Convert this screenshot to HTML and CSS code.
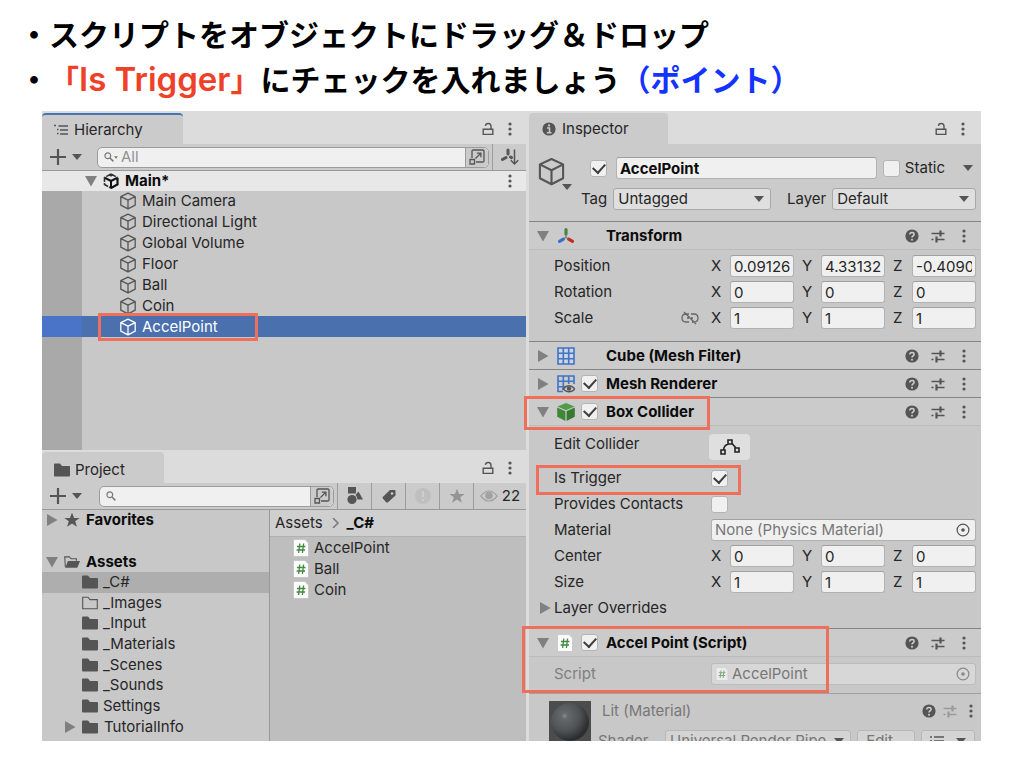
FILE: index.html
```html
<!DOCTYPE html>
<html lang="ja">
<head>
<meta charset="utf-8">
<title>Is Trigger</title>
<link rel="stylesheet" href="styles.css">
</head>
<body>
<svg class="sprite" aria-hidden="true">
  <symbol id="cube" viewBox="0 0 18 18"><path d="M9 1.2 16.2 4.6V13.2L9 16.9 1.8 13.2V4.6ZM1.8 4.6 9 8.2 16.2 4.6M9 8.2V16.9" fill="none" stroke="currentColor" stroke-width="1.3" stroke-linejoin="round"/></symbol>
  <symbol id="down" viewBox="0 0 12 12"><path d="M0 1H12L6 11.5Z" fill="currentColor"/></symbol>
  <symbol id="right" viewBox="0 0 12 12"><path d="M1 0V12L11.5 6Z" fill="currentColor"/></symbol>
  <symbol id="caret" viewBox="0 0 10 6"><path d="M0 0H10L5 6Z" fill="currentColor"/></symbol>
  <symbol id="dots" viewBox="0 0 4 14"><g fill="currentColor"><circle cx="2" cy="2" r="1.6"/><circle cx="2" cy="7" r="1.6"/><circle cx="2" cy="12" r="1.6"/></g></symbol>
  <symbol id="lock" viewBox="0 0 12 14"><path d="M1.2 7.2H10.8V12.4H1.2ZM9 7V4.2C9 .8 3.8.6 3.4 3.8" fill="none" stroke="currentColor" stroke-width="1.4"/></symbol>
  <symbol id="plus" viewBox="0 0 16 16"><path d="M8 0V16M0 8H16" stroke="currentColor" stroke-width="2.2"/></symbol>
  <symbol id="search" viewBox="0 0 10 10"><circle cx="3.8" cy="3.8" r="2.9" fill="none" stroke="currentColor" stroke-width="1.2"/><path d="M6 6 9.4 9.4" stroke="currentColor" stroke-width="1.5"/></symbol>
  <symbol id="popout" viewBox="0 0 16 16"><g fill="none" stroke="currentColor" stroke-width="1.3"><path d="M3 9V2.2Q3 1 4.2 1H13.8Q15 1 15 2.2V11.8Q15 13 13.800 13H7"/><path d="M1 10.500H5.500V15H1ZM6.500 9.500 11.600 4.400M7.800 4.200H11.900V8.300"/></g></symbol>
  <symbol id="folder" viewBox="0 0 16 14"><path d="M0 1.500Q0 .5 1 .5H6L8 3H15Q16 3 16 4V12.500Q16 13.500 15 13.500H1Q0 13.500 0 12.500Z" fill="currentColor"/></symbol>
  <symbol id="folder-line" viewBox="0 0 16 14"><path d="M.7 1.200H6L8 3.600H15.300V12.800H.7Z" fill="none" stroke="currentColor" stroke-width="1.100"/></symbol>
  <symbol id="folder-open" viewBox="0 0 18 14"><path d="M1.500 12.500.8 1.200H6L8 3.400H14V5.600" fill="none" stroke="currentColor" stroke-width="1.200"/><path d="M4.500 5.800H18L15 13.500H1.300Z" fill="currentColor"/></symbol>
  <symbol id="star" viewBox="0 0 16 16"><path d="M8 .8 10.100 6H15.600L11.200 9.300 12.900 14.800 8 11.500 3.100 14.800 4.800 9.300.4 6H5.900Z" fill="currentColor"/></symbol>
  <symbol id="help" viewBox="0 0 14 14"><circle cx="7" cy="7" r="6.600" fill="currentColor"/><path d="M4.800 5.500C4.900 2.600 9.300 2.800 9.100 5.400 9 6.800 7 6.900 7 8.500" fill="none" stroke="#d0d0d0" stroke-width="1.500"/><circle cx="7" cy="10.700" r="1" fill="#d0d0d0"/></symbol>
  <symbol id="sliders" viewBox="0 0 14 14"><g stroke="currentColor" fill="none"><path d="M.5 4.500H13.500M.5 10.500H2.500M5 10.500H13.500" stroke-width="1.300"/><path d="M9.500 1.500V7.500M5.500 7.500V13.500" stroke-width="2.200"/></g></symbol>
  <symbol id="script" viewBox="0 0 16 18"><path d="M1.500 .5H12L15.500 4V16.500Q15.500 17.500 14.500 17.500H1.500Q.5 17.500 .5 16.500V1.500Q.5 .5 1.500 .5Z" fill="#fbfbfb" stroke="#bbb" stroke-width=".6"/><path d="M6.800 4.500 5.600 14M10.600 4.500 9.400 14M4 7.500H12.400M3.600 11H12" stroke="#43893f" stroke-width="1.300" fill="none"/></symbol>
  <symbol id="axes" viewBox="0 0 18 18"><g stroke-width="3.200" fill="none"><path d="M9 2.500V7" stroke="#43893f" stroke-linecap="round"/><path d="M6.300 12.200 2.500 14.300" stroke="#2f6fd6" stroke-linecap="round"/><path d="M11.700 12.200 15.500 14.300" stroke="#c42a20" stroke-linecap="round"/><path d="M9 7V10.500L6 12M9 10.500 12 12" stroke="#666" stroke-width="1"/></g></symbol>
  <symbol id="grid" viewBox="0 0 18 18"><path d="M1.700 1.700H16.300V16.300H1.700Z" fill="#cfe0f8" opacity=".5"/><path d="M1 1H17V17H1ZM6.300 1V17M11.700 1V17M1 6.300H17M1 11.700H17" fill="none" stroke="#3f74c8" stroke-width="1.600"/></symbol>
  <symbol id="renderer" viewBox="0 0 18 18"><path d="M6 16.500H1V1H17V9M6.300 1V15M11.700 1V9M1 6.300H17M1 11.700H8" fill="none" stroke="#3f74c8" stroke-width="1.600"/><path d="M6 14Q12 7.500 18 14 12 19.500 6 14Z" fill="#cbcbcb" stroke="#555" stroke-width="1.400"/><circle cx="12" cy="13.600" r="2.200" fill="#555"/></symbol>
  <symbol id="collider" viewBox="0 0 18 18"><path d="M9 0 17.500 3.600 9 7.200.5 3.600Z" fill="#549a4a"/><path d="M.2 4.600 8.400 8.200V18L.2 13.800Z" fill="#418739"/><path d="M17.800 4.600 9.600 8.200V18L17.800 13.800Z" fill="#37792f"/></symbol>
  <symbol id="eye" viewBox="0 0 18 12"><path d="M.8 6Q9-4 17.200 6 9 16 .8 6Z" fill="none" stroke="currentColor" stroke-width="1.200"/><circle cx="9" cy="5.500" r="3.800" fill="currentColor"/></symbol>
  <symbol id="target" viewBox="0 0 14 14"><circle cx="7" cy="7" r="5.900" fill="none" stroke="currentColor" stroke-width="1.200"/><circle cx="7" cy="7" r="1.800" fill="currentColor"/></symbol>
</svg>

<main class="slide">
  <ul class="points">
    <li>・スクリプトをオブジェクトにドラッグ＆ドロップ</li>
    <li>・<span class="red">「<span class="latin">Is Trigger</span>」</span>にチェックを入れましょう<span class="blue">（ポイント）</span></li>
  </ul>

  <div class="editor">
    <div class="column">
      <section class="hierarchy">
        <header class="tabbar">
          <h2 class="tab active"><svg class="i14" viewBox="0 0 14 14"><path d="M4.500 3H14M6 7H14M6 11H14" stroke="currentColor" stroke-width="1.300"/><path d="M0 2.500H2M3 6.500H4.500M3 10.500H4.500" stroke="currentColor" stroke-width="1.400" fill="none"/></svg>Hierarchy</h2>
          <button class="tool" aria-label="Lock"><svg class="lock"><use href="#lock"/></svg></button>
          <button class="tool" aria-label="Menu"><svg class="dots"><use href="#dots"/></svg></button>
        </header>
        <div class="toolbar">
          <button class="add" aria-label="Add"><svg class="i16"><use href="#plus"/></svg><svg class="caret"><use href="#caret"/></svg></button>
          <div class="search"><svg class="i10"><use href="#search"/></svg><svg class="tiny"><use href="#caret"/></svg><input type="text" placeholder="All" aria-label="Search hierarchy"><button class="popout" aria-label="Open search"><svg class="i16"><use href="#popout"/></svg></button></div>
          <button class="cell" aria-label="Sort"><svg class="i18" viewBox="0 0 18 18"><path d="M7 2V6M5 9.500 1.500 11.500M9.500 9 10.500 9.600" stroke="currentColor" stroke-width="3" stroke-linecap="round"/><path d="M13.500 1.500V16M9.800 12.300 13.500 16 17.200 12.300" stroke="currentColor" stroke-width="1.500" fill="none"/></svg></button>
        </div>
        <div class="scene">
          <svg class="fold"><use href="#down"/></svg>
          <svg class="i16" viewBox="0 0 16 16"><path d="M8 3.500V1M8 1 14.500 4.500M8 1 1.500 4.500V11.500L8 15 14.500 11.500V4.500" fill="none" stroke="#333" stroke-width="1.600" stroke-dasharray="5.500 1"/><path d="M2 4.800 8 8 14 4.800M8 8V15M8 15 14.500 11.500V5" fill="none" stroke="#111" stroke-width="2"/></svg>
          <b>Main*</b>
          <button class="tool" aria-label="Scene menu"><svg class="dots"><use href="#dots"/></svg></button>
        </div>
        <div class="objects">
          <ul class="object-list">
            <li><svg class="i18"><use href="#cube"/></svg>Main Camera</li>
            <li><svg class="i18"><use href="#cube"/></svg>Directional Light</li>
            <li><svg class="i18"><use href="#cube"/></svg>Global Volume</li>
            <li><svg class="i18"><use href="#cube"/></svg>Floor</li>
            <li><svg class="i18"><use href="#cube"/></svg>Ball</li>
            <li><svg class="i18"><use href="#cube"/></svg>Coin</li>
            <li class="selected"><svg class="i18"><use href="#cube"/></svg>AccelPoint<span class="mark mark-object"></span></li>
          </ul>
        </div>
      </section>

      <section class="project">
        <header class="tabbar">
          <h2 class="tab"><svg class="folder"><use href="#folder"/></svg>Project</h2>
          <button class="tool" aria-label="Lock"><svg class="lock"><use href="#lock"/></svg></button>
          <button class="tool" aria-label="Menu"><svg class="dots"><use href="#dots"/></svg></button>
        </header>
        <div class="toolbar">
          <button class="add" aria-label="Add"><svg class="i16"><use href="#plus"/></svg><svg class="caret"><use href="#caret"/></svg></button>
          <div class="search"><svg class="i10"><use href="#search"/></svg><input type="text" aria-label="Search project"><button class="popout" aria-label="Open search"><svg class="i16"><use href="#popout"/></svg></button></div>
          <button class="cell" aria-label="Filter by type"><svg class="i18" viewBox="0 0 18 18"><g fill="currentColor"><path d="M2 0H10V6.500H2Z"/><circle cx="6" cy="12.500" r="4.600"/><path d="M12.500 4.500 17 12.500H11.500Q11 9 9.500 8Z"/></g></svg></button>
          <button class="cell" aria-label="Filter by label"><svg class="i14" viewBox="0 0 14 14"><path d="M8 1H12.500Q13.500 1 13.500 2V6.500L6 13.300Q5 14 4.200 13.200L.8 9.600Q0 8.800 1 7.800Z" fill="currentColor"/><circle cx="10" cy="4.500" r="1.300" fill="#cbcbcb"/></svg></button>
          <button class="cell" aria-label="Filter by log"><svg class="i18" viewBox="0 0 18 18"><circle cx="9" cy="9" r="8" fill="#bfbfbf"/><path d="M9 4V10M9 12V14" stroke="#cecece" stroke-width="2"/></svg></button>
          <button class="cell faded" aria-label="Saved searches"><svg class="i16"><use href="#star"/></svg></button>
          <button class="cell hidden-count"><svg class="eye"><use href="#eye"/></svg>22</button>
        </div>
        <div class="browser">
          <ul class="tree">
            <li class="root"><svg class="fold"><use href="#right"/></svg><svg class="i16"><use href="#star"/></svg><b>Favorites</b></li>
            <li></li>
            <li class="root"><svg class="fold"><use href="#down"/></svg><svg class="folder"><use href="#folder-open"/></svg><b>Assets</b></li>
            <li class="current"><svg class="folder"><use href="#folder"/></svg>_C#</li>
            <li><svg class="folder"><use href="#folder-line"/></svg>_Images</li>
            <li><svg class="folder"><use href="#folder"/></svg>_Input</li>
            <li><svg class="folder"><use href="#folder"/></svg>_Materials</li>
            <li><svg class="folder"><use href="#folder"/></svg>_Scenes</li>
            <li><svg class="folder"><use href="#folder"/></svg>_Sounds</li>
            <li><svg class="folder"><use href="#folder"/></svg>Settings</li>
            <li class="nested"><svg class="fold"><use href="#right"/></svg><svg class="folder"><use href="#folder"/></svg>TutorialInfo</li>
          </ul>
          <div class="files">
            <nav class="crumbs"><a href="#assets">Assets</a><svg class="i10" viewBox="0 0 10 10"><path d="M3 0 8 5 3 10" fill="none" stroke="#777" stroke-width="1.500"/></svg><b>_C#</b></nav>
            <ul class="file-list">
              <li><svg class="page"><use href="#script"/></svg>AccelPoint</li>
              <li><svg class="page"><use href="#script"/></svg>Ball</li>
              <li><svg class="page"><use href="#script"/></svg>Coin</li>
            </ul>
          </div>
        </div>
      </section>
    </div>

    <section class="inspector">
      <header class="tabbar">
        <h2 class="tab"><svg class="i14" viewBox="0 0 14 14"><circle cx="7" cy="7" r="6.600" fill="currentColor"/><path d="M5 6H7.500V10.500M4.800 10.800H9.500" stroke="#cbcbcb" stroke-width="1.600" fill="none"/><circle cx="7" cy="3.400" r="1.100" fill="#cbcbcb"/></svg>Inspector</h2>
        <button class="tool" aria-label="Lock"><svg class="lock"><use href="#lock"/></svg></button>
        <button class="tool" aria-label="Menu"><svg class="dots"><use href="#dots"/></svg></button>
      </header>

      <div class="object-head">
        <div class="object-icon"><svg class="big"><use href="#cube"/></svg><svg class="caret"><use href="#caret"/></svg></div>
        <div class="object-fields">
          <div class="name-row">
            <input type="checkbox" checked aria-label="Active">
            <input class="field name" type="text" value="AccelPoint" aria-label="Name">
            <input type="checkbox" id="static"><label for="static">Static</label>
            <svg class="caret"><use href="#caret"/></svg>
          </div>
          <div class="tag-row">
            <label for="tag">Tag</label>
            <div class="select tag"><select id="tag"><option>Untagged</option></select><svg class="caret"><use href="#caret"/></svg></div>
            <label for="layer">Layer</label>
            <div class="select layer"><select id="layer"><option>Default</option></select><svg class="caret"><use href="#caret"/></svg></div>
          </div>
        </div>
      </div>

      <section class="component">
        <header class="head"><svg class="fold"><use href="#down"/></svg><svg class="i18"><use href="#axes"/></svg><span></span><h3>Transform</h3>
          <div class="actions"><svg class="i14"><use href="#help"/></svg><svg class="i14"><use href="#sliders"/></svg><svg class="dots"><use href="#dots"/></svg></div></header>
        <div class="props transform">
          <div class="row"><span class="label">Position</span><div class="vec"><label>X<input class="field" value="0.09126"></label><label>Y<input class="field" value="4.33132"></label><label>Z<input class="field" value="-0.40901"></label></div></div>
          <div class="row"><span class="label">Rotation</span><div class="vec"><label>X<input class="field" value="0"></label><label>Y<input class="field" value="0"></label><label>Z<input class="field" value="0"></label></div></div>
          <div class="row"><span class="label">Scale<svg class="i18" viewBox="0 0 18 18"><g fill="none" stroke="#666" stroke-width="1.300"><path d="M8 5H5Q1 5 1 9 1 13 5 13H8M11 13H13Q17 13 17 9 17 5 13 5H10M6 9H8M10 9H12M3 3 15 15"/></g></svg></span><div class="vec"><label>X<input class="field" value="1"></label><label>Y<input class="field" value="1"></label><label>Z<input class="field" value="1"></label></div></div>
        </div>
      </section>

      <section class="component">
        <header class="head"><svg class="fold"><use href="#right"/></svg><svg class="i18"><use href="#grid"/></svg><span></span><h3>Cube (Mesh Filter)</h3>
          <div class="actions"><svg class="i14"><use href="#help"/></svg><svg class="i14"><use href="#sliders"/></svg><svg class="dots"><use href="#dots"/></svg></div></header>
      </section>
      <section class="component">
        <header class="head"><svg class="fold"><use href="#right"/></svg><svg class="i18"><use href="#renderer"/></svg><input type="checkbox" checked aria-label="Mesh Renderer enabled"><h3>Mesh Renderer</h3>
          <div class="actions"><svg class="i14"><use href="#help"/></svg><svg class="i14"><use href="#sliders"/></svg><svg class="dots"><use href="#dots"/></svg></div></header>
      </section>

      <section class="component">
        <header class="head"><svg class="fold"><use href="#down"/></svg><svg class="i18"><use href="#collider"/></svg><input type="checkbox" checked aria-label="Box Collider enabled"><h3>Box Collider</h3>
          <div class="actions"><svg class="i14"><use href="#help"/></svg><svg class="i14"><use href="#sliders"/></svg><svg class="dots"><use href="#dots"/></svg></div>
          <span class="mark mark-collider"></span></header>
        <div class="props collider">
          <div class="row edit"><span class="label">Edit Collider</span><button class="edit-button" aria-label="Edit Collider"><svg class="nodes" viewBox="0 0 20 16"><g fill="none" stroke="#222" stroke-width="1.600"><path d="M8 1H12V5H8ZM1 11H5V15H1ZM15 9H19V13H15ZM8.500 5Q4 6 3.500 11M12 4.500 16 9"/></g></svg></button></div>
          <div class="row"><label class="label" for="trigger">Is Trigger</label><input type="checkbox" id="trigger" checked><span class="mark mark-trigger"></span></div>
          <div class="row"><label class="label" for="contacts">Provides Contacts</label><input type="checkbox" id="contacts"></div>
          <div class="row"><span class="label">Material</span><div class="field reference"><span>None (Physics Material)</span><svg class="i14"><use href="#target"/></svg></div></div>
          <div class="row"><span class="label">Center</span><div class="vec"><label>X<input class="field" value="0"></label><label>Y<input class="field" value="0"></label><label>Z<input class="field" value="0"></label></div></div>
          <div class="row"><span class="label">Size</span><div class="vec"><label>X<input class="field" value="1"></label><label>Y<input class="field" value="1"></label><label>Z<input class="field" value="1"></label></div></div>
          <div class="row"><svg class="fold"><use href="#right"/></svg><span class="label">Layer Overrides</span></div>
        </div>
      </section>

      <section class="component">
        <header class="head"><svg class="fold"><use href="#down"/></svg><svg class="page"><use href="#script"/></svg><input type="checkbox" checked aria-label="Accel Point enabled"><h3>Accel Point (Script)</h3>
          <div class="actions"><svg class="i14"><use href="#help"/></svg><svg class="i14"><use href="#sliders"/></svg><svg class="dots"><use href="#dots"/></svg></div></header>
        <div class="props script">
          <div class="row"><span class="label">Script</span><div class="field reference"><svg class="i14"><use href="#script"/></svg><span>AccelPoint</span><svg class="i14"><use href="#target"/></svg></div></div>
        </div>
        <span class="mark mark-script"></span>
      </section>

      <section class="component material">
        <svg class="sphere" viewBox="0 0 42 42"><defs><radialGradient id="shade" cx=".36" cy=".34" r=".65"><stop offset="0" stop-color="#8b8d8f"/><stop offset=".12" stop-color="#66696b"/><stop offset=".6" stop-color="#505355"/><stop offset="1" stop-color="#2c2d2e"/></radialGradient></defs><path d="M0 0H42V42H0Z" fill="#4c4c4c"/><circle cx="21" cy="21" r="19" fill="url(#shade)"/></svg>
        <div class="material-main">
          <header class="material-head"><h3>Lit (Material)</h3>
            <div class="actions"><svg class="i14"><use href="#help"/></svg><svg class="i14 pale"><use href="#sliders"/></svg><svg class="dots"><use href="#dots"/></svg></div></header>
          <div class="shader"><label for="shader">Shader</label>
            <div class="select"><select id="shader"><option>Universal Render Pipe</option></select><svg class="caret"><use href="#caret"/></svg></div>
            <button class="edit-shader">Edit...</button>
            <button class="list-shader" aria-label="Presets"><svg class="i14" viewBox="0 0 14 14"><path d="M4 3H14M4 7H14M0 3H2M0 7H2" stroke="currentColor" stroke-width="1.300"/></svg><svg class="caret"><use href="#caret"/></svg></button></div>
        </div>
      </section>
    </section>
  </div>
</main>
</body>
</html>
```

FILE: styles.css
```css
* { box-sizing: border-box; }

body {
  margin: 0;
  background: #fff;
  color: #262626;
  font: 15px/20px Inter, "Liberation Sans", sans-serif;
}

ul, h2, h3 { margin: 0; padding: 0; list-style: none; font-size: inherit; }
button, input, select { font: inherit; color: inherit; margin: 0; }
button { border: 0; padding: 0; background: none; display: flex; align-items: center; justify-content: center; }
svg { flex: none; display: block; color: #555; }
b, h3 { font-weight: 700; color: #0c0c0c; }
a { color: inherit; text-decoration: none; }

.sprite { position: absolute; width: 0; height: 0; }
.i10 { width: 10px; height: 10px; }
.i14 { width: 14px; height: 14px; }
.i16 { width: 16px; height: 16px; }
.i18 { width: 18px; height: 18px; }
.big { width: 29px; height: 29px; }
.lock { width: 12px; height: 14px; }
.dots { width: 4px; height: 14px; }
.caret { width: 10px; height: 6px; }
.tiny { width: 4px; height: 3px; }
.fold { width: 12px; height: 12px; color: #808080; }
.folder { width: 16px; height: 14px; }
.page { width: 16px; height: 18px; }
.eye { width: 18px; height: 12px; color: #a2a2a2; }
.nodes { width: 20px; height: 16px; }

/* Slide */
.slide { padding: 11px 43px 27px 42px; }
.points {
  margin: 0 0 10px -23px;
  color: #000;
  font: 700 30px/45px "Noto Sans CJK JP", sans-serif;
  text-spacing-trim: space-all;
  white-space: nowrap;
}
.points li { height: 45px; }
.latin { font: 600 33px/33px Inter, sans-serif; }
.red { color: #ee4128; }
.blue { color: #1433ff; }

.editor {
  display: grid;
  grid-template-columns: 484fr 452fr;
  gap: 3px;
  background: #dcdcdc;
}
.column { display: flex; flex-direction: column; min-width: 0; }

/* Tabs and toolbars */
.tabbar { display: flex; align-items: center; height: 33px; padding: 2px 5px 0 0; background: #dcdcdc; }
.tab {
  display: flex;
  align-items: center;
  gap: 6px;
  height: 31px;
  min-width: 141px;
  margin-right: auto;
  padding: 0 12px;
  border-radius: 4px 4px 0 0;
  background: #cbcbcb;
  font-weight: 400;
}
.project .tab { min-width: 122px; gap: 5px; padding-top: 4px; }
.inspector .tab { min-width: 139px; padding-left: 13px; }
.inspector .tabbar { padding-right: 7px; }
.tab.active { border-top: 2px solid #4a73b3; }
.tool { width: 22px; height: 20px; }

.toolbar { display: flex; align-items: center; height: 27px; padding-left: 8px; background: #cbcbcb; border-bottom: 1px solid #999; }
.add { width: 32px; justify-content: space-between; }
.search {
  display: flex;
  flex: 1;
  align-items: center;
  height: 21px;
  min-width: 0;
  margin: 0 3px 0 15px;
  padding-left: 6px;
  border: 1px solid #9c9c9c;
  border-radius: 5px;
  background: #f0f0f0;
}
.project .search { margin-left: 17px; }
.search .i10, .search .tiny { color: #777; }
.search input { flex: 1; min-width: 0; height: 19px; padding: 0 3px; border: 0; outline: 0; background: none; }
.search input::placeholder { color: #929292; opacity: 1; }
.popout { width: 23px; height: 19px; border-left: 1px solid #9c9c9c; border-radius: 0 5px 5px 0; background: #cbcbcb; }
.cell { width: 34px; height: 26px; border-left: 1px solid #9c9c9c; }
.faded svg { color: #949494; }
.hidden-count { width: 53px; gap: 4px; }

/* Hierarchy */
.hierarchy { display: flex; flex: 1; flex-direction: column; }
.scene { display: flex; align-items: center; height: 20px; padding: 0 5px 0 43px; background: #e8e8e8; }
.scene .i16 { margin: 0 6px; }
.scene .tool { margin-left: auto; }
.objects { flex: 1; background: linear-gradient(90deg, #a9a9a9 40px, #c8c8c8 40px); }
.object-list { display: grid; grid-auto-rows: 1fr; height: 146px; }
.object-list li { display: flex; align-items: center; gap: 5px; padding-left: 77px; }
.selected { position: relative; background: linear-gradient(90deg, #4a74c8 40px, #4a70ad 40px); color: #fff; }
.selected svg { color: #fff; }

/* Project */
.browser { display: grid; grid-template-columns: 228fr 256fr; height: 231px; }
.tree {
  display: grid;
  grid-template-rows: repeat(11, 1fr);
  padding-bottom: 4px;
  border-right: 1px solid #999;
  background: #c8c8c8;
}
.tree li { display: flex; align-items: center; gap: 5px; padding-left: 40px; }
.tree .root { gap: 6px; padding-left: 4px; }
.tree .nested { padding-left: 22px; gap: 6px; }
.tree .current { background: #aeaeae; }
.files { background: #bebebe; }
.crumbs { display: flex; align-items: center; gap: 7px; height: 27px; padding-left: 5px; background: #cfcfcf; border-bottom: 1px solid #b0b0b0; }
.file-list { display: grid; grid-auto-rows: 21px; }
.file-list li { display: flex; align-items: center; gap: 5px; padding-left: 23px; }

/* Form controls */
input[type="checkbox"] {
  display: grid;
  place-items: center;
  flex: none;
  appearance: none;
  width: 17px;
  height: 17px;
  border: 1px solid #b4b4b4;
  border-radius: 3px;
  background: #f0f0f0;
}
input[type="checkbox"]:checked::after {
  content: "";
  width: 6px;
  height: 10px;
  margin-top: -3px;
  border: solid #3c3c3c;
  border-width: 0 2px 2px 0;
  transform: rotate(42deg);
}
.field {
  min-width: 0;
  width: 100%;
  height: 22px;
  padding: 0 3px;
  border: 1px solid #b2b2b2;
  border-top-color: #a0a0a0;
  border-radius: 3px;
  outline: 0;
  background: #f0f0f0;
}
.select { position: relative; min-width: 0; }
.select select {
  display: block;
  appearance: none;
  width: 100%;
  height: 22px;
  padding: 0 20px 0 4px;
  border: 1px solid #a8a8a8;
  border-radius: 3px;
  background: #dfdfdf;
}
.select .caret { position: absolute; right: 7px; top: 8px; pointer-events: none; }

/* Inspector */
.inspector { min-width: 0; background: #c8c8c8; }
.object-head { display: flex; height: 77px; padding: 13px 5px 0 9px; background: #cbcbcb; }
.object-icon { display: flex; width: 43px; }
.object-icon .big { margin: 0 -4px 0 -1px; }
.object-icon .caret { margin-top: 27px; }
.object-fields { display: flex; flex: 1; flex-direction: column; gap: 9px; min-width: 0; }
.name-row, .tag-row { display: flex; align-items: center; }
.name-row { padding-left: 9px; }
.name-row .name { flex: 1; margin: 0 6px 0 9px; color: #0c0c0c; font-weight: 700; }
.name-row label { margin: 0 18px 0 5px; }
.name-row .caret { margin-right: 3px; }
.tag-row { gap: 6px; }
.tag { flex: 157; margin-right: 10px; }
.layer { flex: 143; }

.component { position: relative; border-top: 1px solid #858585; }
.head {
  position: relative;
  display: grid;
  grid-template-columns: 20px 24px 25px 1fr auto;
  align-items: center;
  height: 27px;
  padding: 0 4px 0 8px;
  background: #cbcbcb;
}
.actions { display: grid; grid-template-columns: repeat(3, 26px); align-items: center; justify-items: center; }
.props { padding: 4px 5px 7px 10px; border-top: 1px solid #bcbcbc; }
.transform { padding: 3px 5px 10px 10px; }
.collider { padding-top: 8px; }
.script { padding-top: 4px; padding-bottom: 6px; color: #7f7f7f; }
.row { position: relative; display: grid; grid-template-columns: 15px 157px 1fr; align-items: center; height: 26px; }
.row .label { display: flex; grid-column: 2; align-items: center; justify-content: space-between; padding-right: 12px; white-space: nowrap; }
.row .fold { grid-column: 1; }
.edit { margin-bottom: 5px; }
.edit .label { align-self: start; }
.edit-button { width: 41px; height: 26px; margin-left: -2px; border-radius: 4px; background: #dfdfdf; }
.vec { display: grid; grid-template-columns: repeat(3, 1fr); gap: 8px; }
.vec label { display: grid; grid-template-columns: 19px 1fr; align-items: center; }
.reference { display: flex; align-items: center; gap: 3px; padding: 0 5px 0 3px; color: #777; }
.reference span { margin-right: auto; }
.script .reference { border-color: #bbb; background: #d7d7d7; }
.script .reference svg { opacity: .6; }

/* Material preview, cut off by the end of the window */
.material { display: flex; gap: 11px; height: 48px; padding: 7px 0 0 20px; overflow: hidden; border-color: #a0a0a0; color: #777; }
.sphere { width: 42px; height: 42px; }
.material-main { flex: 1; min-width: 0; }
.material-head { display: flex; align-items: center; justify-content: space-between; height: 20px; }
.material h3 { color: #777; font-weight: 400; }
.material .actions { grid-template-columns: repeat(3, 21px); }
.pale { color: #9a9a9a; }
.shader { display: flex; gap: 6px; margin: 9px 6px 0 -4px; }
.shader label { width: 61px; line-height: 22px; }
.shader .select { flex: 1; }
.shader .select select { border-color: #b8b8b8; background: #d4d4d4; }
.edit-shader, .list-shader { height: 22px; border: 1px solid #b8b8b8; border-radius: 3px; background: #d4d4d4; }
.edit-shader { width: 58px; }
.list-shader { width: 54px; gap: 12px; }

/* Callout frames drawn over the editor */
.mark { position: absolute; border: 3px solid #ee705c; pointer-events: none; }
.mark-object { left: 56px; top: -3px; width: 160px; height: 28px; }
.mark-collider { left: -5px; top: -2px; width: 186px; height: 34px; z-index: 1; }
.mark-trigger { left: -3px; top: 0; width: 205px; height: 30px; }
.mark-script { left: -7px; top: -3px; width: 307px; height: 67px; z-index: 1; }
```
